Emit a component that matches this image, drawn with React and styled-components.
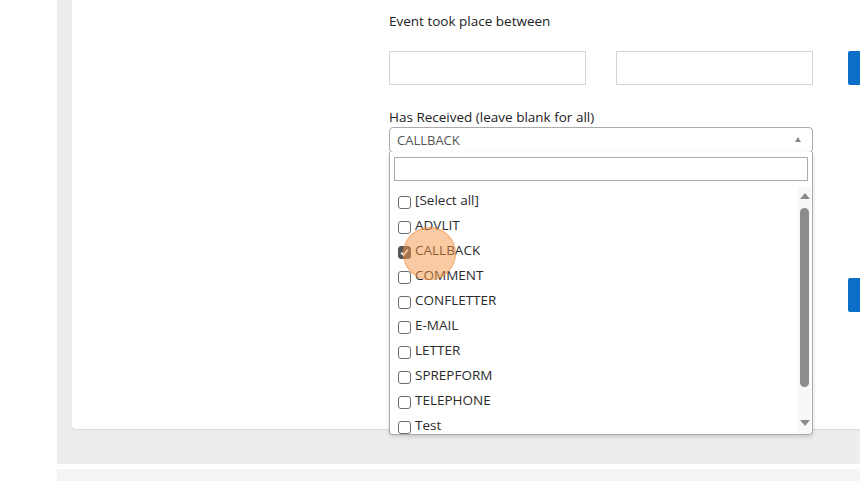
import React from "react";
import styled, { createGlobalStyle } from "styled-components";

const items = [
  "[Select all]",
  "ADVLIT",
  "CALLBACK",
  "COMMENT",
  "CONFLETTER",
  "E-MAIL",
  "LETTER",
  "SPREPFORM",
  "TELEPHONE",
  "Test",
];

const App = () => {
  return (
    <>
      <GlobalStyle />
      <StyledPage>
        <StyledPanel>
          <StyledCard>
            <StyledForm>
              <StyledFields>
                <StyledLabel>Event took place between</StyledLabel>
                <StyledDateRow>
                  <StyledInput />
                  <StyledInput />
                </StyledDateRow>
                <StyledLabel $top={22}>Has Received (leave blank for all)</StyledLabel>
                <StyledSelectWrap>
                  <StyledSelect>
                    <span>CALLBACK</span>
                    <StyledCaret />
                  </StyledSelect>
                  <StyledDropdown>
                    <StyledSearch />
                    <StyledListWrap>
                      <StyledList>
                        {items.map((item) => (
                          <StyledItem key={item}>
                            <StyledCheck $checked={item === "CALLBACK"}>
                              {item === "CALLBACK" && (
                                <svg width="9" height="9" viewBox="0 0 9 9">
                                  <path
                                    d="M1.2 4.6 L3.6 7 L7.8 1.8"
                                    fill="none"
                                    stroke="#fff"
                                    strokeWidth="1.8"
                                  />
                                </svg>
                              )}
                            </StyledCheck>
                            {item}
                          </StyledItem>
                        ))}
                      </StyledList>
                      <StyledScrollbar>
                        <StyledArrow />
                        <StyledThumb />
                        <StyledArrow $down />
                      </StyledScrollbar>
                    </StyledListWrap>
                    <StyledClickMark />
                  </StyledDropdown>
                </StyledSelectWrap>
              </StyledFields>
              <StyledButtons>
                <StyledButton />
                <StyledButton $top={193} />
              </StyledButtons>
            </StyledForm>
          </StyledCard>
        </StyledPanel>
        <StyledFooter />
      </StyledPage>
    </>
  );
};

const GlobalStyle = createGlobalStyle`
  body {
    margin: 0;
    background: #ffffff;
    font-family: "Open Sans", "Noto Sans", sans-serif;
    overflow: hidden;
  }
`;

const StyledPage = styled.div`
  padding-left: 57px;
  height: 481px;
  display: flex;
  flex-direction: column;
  gap: 5px;
`;

const StyledPanel = styled.div`
  background: #eeeded;
  height: 464px;
  padding-left: 15px;
  box-sizing: border-box;
`;

const StyledFooter = styled.div`
  flex: 1;
  background: #f3f4f5;
`;

const StyledCard = styled.div`
  background: #ffffff;
  height: 429px;
  border-radius: 0 0 0 4px;
  box-shadow: 0 1px 1px rgba(0, 0, 0, 0.08);
  padding-left: 317px;
  box-sizing: border-box;
`;

const StyledForm = styled.div`
  display: flex;
  gap: 35px;
`;

const StyledFields = styled.div`
  width: 424px;
`;

const StyledLabel = styled.div`
  font-size: 13.5px;
  line-height: 20px;
  color: #222222;
  margin-top: ${(p) => p.$top ?? 11}px;
`;

const StyledDateRow = styled.div`
  display: flex;
  gap: 30px;
  margin-top: 20px;
`;

const StyledInput = styled.div`
  width: 197px;
  height: 34px;
  border: 1px solid #d4d4d4;
  box-sizing: border-box;
`;

const StyledSelectWrap = styled.div`
  position: relative;
`;

const StyledSelect = styled.div`
  height: 26px;
  border: 1px solid #aaaaaa;
  border-radius: 4px;
  box-sizing: border-box;
  display: flex;
  align-items: center;
  justify-content: space-between;
  padding: 0 11px 0 7px;
  font-size: 13px;
  color: #555555;
`;

const StyledCaret = styled.span`
  width: 0;
  height: 0;
  border-left: 3.5px solid transparent;
  border-right: 3.5px solid transparent;
  border-bottom: 5px solid #888888;
  margin-top: -1px;
`;

const StyledDropdown = styled.div`
  position: absolute;
  left: 0;
  top: 25px;
  width: 424px;
  height: 283px;
  background: #ffffff;
  border: 1px solid #aaaaaa;
  border-top: none;
  border-radius: 0 0 4px 4px;
  box-shadow: 0 2px 4px rgba(0, 0, 0, 0.15);
  box-sizing: border-box;
  padding: 5px 1px 0 4px;
  overflow: hidden;
  z-index: 2;
`;

const StyledSearch = styled.div`
  height: 24px;
  margin-right: 3px;
  border: 1px solid #aaaaaa;
  box-sizing: border-box;
`;

const StyledListWrap = styled.div`
  display: flex;
  justify-content: space-between;
  height: 253px;
  overflow: hidden;
  margin-top: 6px;
`;

const StyledList = styled.div`
  padding: 0 0 0 4px;
  display: flex;
  flex-direction: column;
`;

const StyledItem = styled.div`
  display: flex;
  align-items: center;
  gap: 4px;
  height: 25px;
  font-size: 13.5px;
  color: #2b2b2b;
  flex-shrink: 0;
`;

const StyledCheck = styled.span`
  width: 13px;
  height: 13px;
  box-sizing: border-box;
  border: 1px solid ${(p) => (p.$checked ? "#555555" : "#6d6d6d")};
  border-radius: 3px;
  background: ${(p) => (p.$checked ? "#555555" : "#ffffff")};
  margin-top: 5px;
  display: flex;
  align-items: center;
  justify-content: center;
`;

const StyledScrollbar = styled.div`
  width: 13px;
  background: #f8f8f8;
  display: flex;
  flex-direction: column;
  align-items: center;
  padding: 6px 0 14px;
  box-sizing: border-box;
  gap: 9px;
`;

const StyledArrow = styled.span`
  width: 0;
  height: 0;
  border-left: 5px solid transparent;
  border-right: 5px solid transparent;
  ${(p) =>
    p.$down
      ? "border-top: 6px solid #8a8a8a; margin-top: auto;"
      : "border-bottom: 6px solid #8a8a8a;"}
`;

const StyledThumb = styled.span`
  width: 9px;
  height: 179px;
  border-radius: 4.5px;
  background: #8c8c8c;
`;

const StyledClickMark = styled.span`
  position: absolute;
  left: 13px;
  top: 75px;
  width: 53px;
  height: 53px;
  border-radius: 50%;
  background: rgba(246, 150, 70, 0.5);
  border: 1px solid rgba(240, 140, 60, 0.55);
  box-sizing: border-box;
  pointer-events: none;
`;

const StyledButtons = styled.div`
  display: flex;
  flex-direction: column;
`;

const StyledButton = styled.div`
  width: 40px;
  height: 34px;
  background: #0b6fc7;
  border-radius: 2px 0 0 2px;
  margin-top: ${(p) => p.$top ?? 51}px;
`;

export default App;
